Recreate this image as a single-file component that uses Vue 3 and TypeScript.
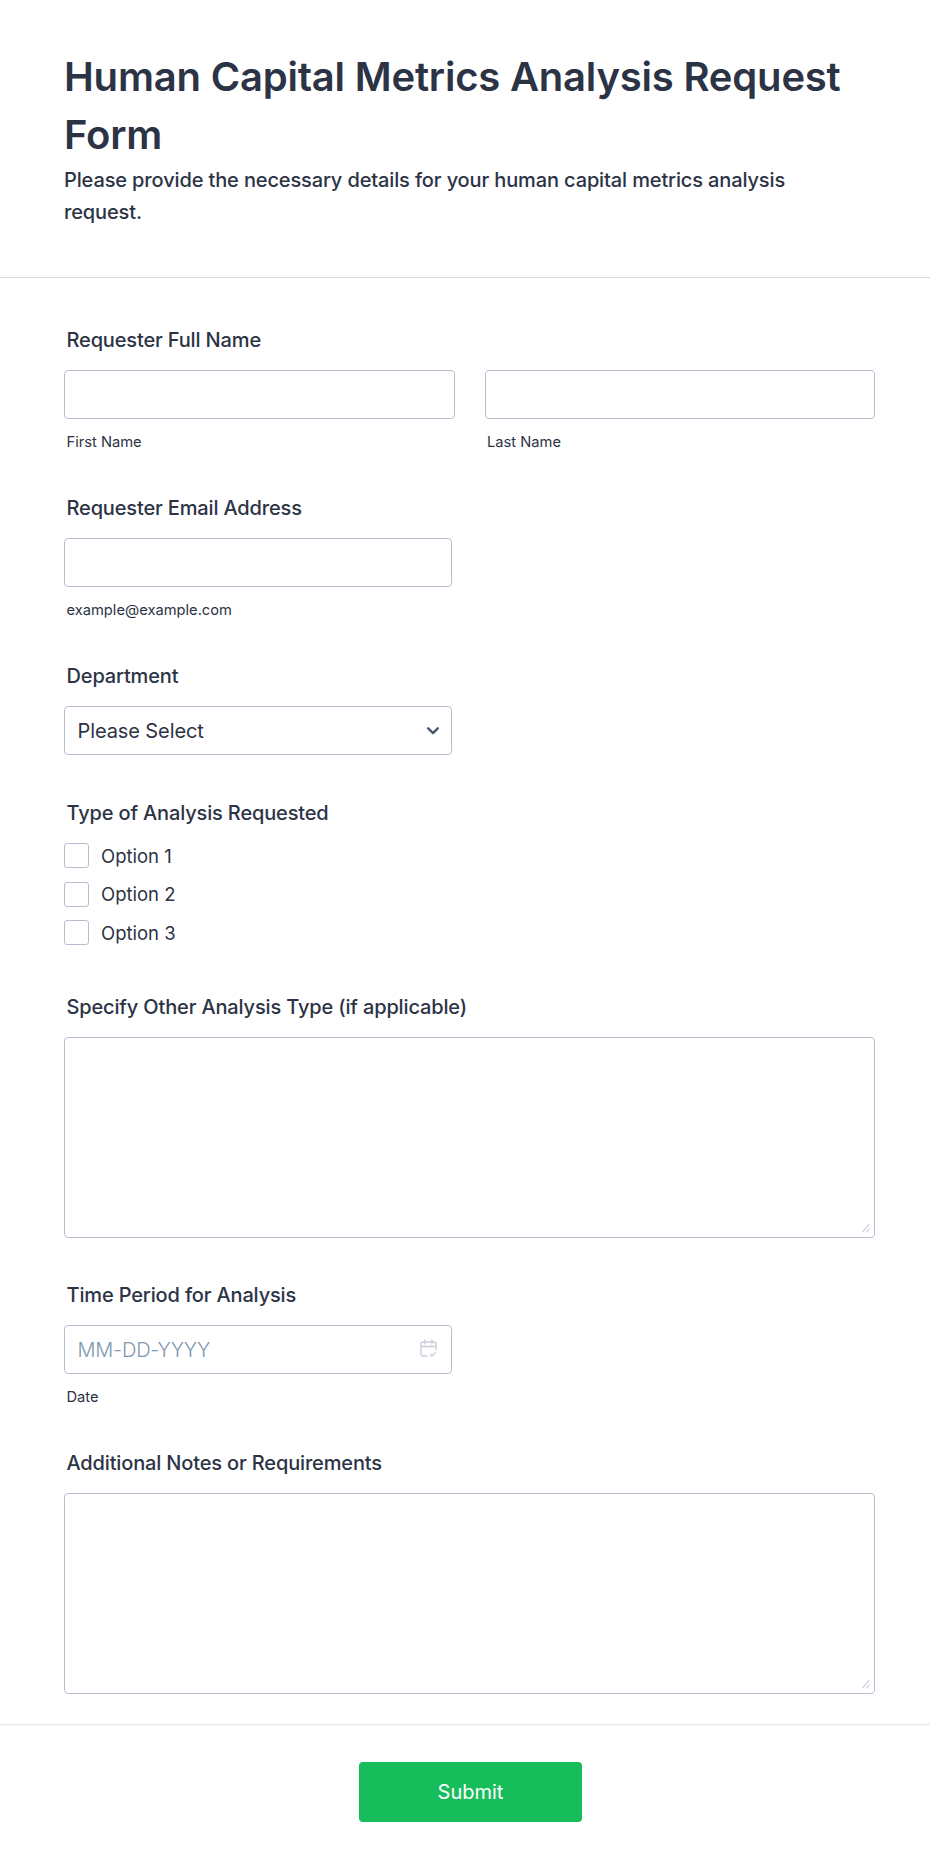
<template>
  <form class="page" @submit.prevent>
    <header class="head">
      <h1 class="head__title">Human Capital Metrics Analysis Request Form</h1>
      <p class="head__sub">Please provide the necessary details for your human capital metrics analysis request.</p>
    </header>

    <div class="body">
      <div class="field">
        <label class="field__label">Requester Full Name</label>
        <div class="name-row">
          <div class="name-col">
            <input class="input" type="text" />
            <span class="field__hint">First Name</span>
          </div>
          <div class="name-col">
            <input class="input" type="text" />
            <span class="field__hint">Last Name</span>
          </div>
        </div>
      </div>

      <div class="field">
        <label class="field__label">Requester Email Address</label>
        <input class="input input--half" type="email" />
        <span class="field__hint">example@example.com</span>
      </div>

      <div class="field field--select">
        <label class="field__label">Department</label>
        <div class="control input--half">
          <select class="input control__select">
            <option>Please Select</option>
          </select>
          <svg class="control__arrow" width="12" height="8" viewBox="0 0 12 8" fill="none">
            <path d="M1.2 1.3 6 6.1l4.8-4.8" stroke="#4b5772" stroke-width="2.4" stroke-linecap="round" stroke-linejoin="round" />
          </svg>
        </div>
      </div>

      <div class="field field--checks">
        <label class="field__label">Type of Analysis Requested</label>
        <label v-for="opt in options" :key="opt" class="check">
          <input class="check__box" type="checkbox" />
          <span>{{ opt }}</span>
        </label>
      </div>

      <div class="field field--area">
        <label class="field__label">Specify Other Analysis Type (if applicable)</label>
        <div class="control control--wide">
          <textarea class="area"></textarea>
          <svg class="area__grip" width="8" height="10" viewBox="0 0 8 10" fill="none">
            <path d="M.6 9 7.4 1M4.2 9.4l3.2-3.8" stroke="#c3c6d6" stroke-width="1.1" />
          </svg>
        </div>
      </div>

      <div class="field">
        <label class="field__label">Time Period for Analysis</label>
        <div class="control input--half">
          <input class="input input--date" type="text" placeholder="MM-DD-YYYY" />
          <!-- calendar with a small tick, same as the form builder's date icon -->
          <svg class="date__icon" width="17" height="19" viewBox="0 0 17 19" fill="none">
            <path d="M7 17H3a2 2 0 0 1-2-2V5a2 2 0 0 1 2-2h11a2 2 0 0 1 2 2v6M1 7.5h15M5 1v4M12 1v4M10.5 15.5l1.5 1.5 3.2-3.2" stroke="#c9cddb" stroke-width="1.4" stroke-linecap="round" stroke-linejoin="round" />
          </svg>
        </div>
        <span class="field__hint">Date</span>
      </div>

      <div class="field field--last">
        <label class="field__label">Additional Notes or Requirements</label>
        <div class="control control--wide">
          <textarea class="area"></textarea>
          <svg class="area__grip" width="8" height="10" viewBox="0 0 8 10" fill="none">
            <path d="M.6 9 7.4 1M4.2 9.4l3.2-3.8" stroke="#c3c6d6" stroke-width="1.1" />
          </svg>
        </div>
      </div>
    </div>

    <footer class="foot">
      <button class="submit" type="submit">Submit</button>
    </footer>
  </form>
</template>

<script setup lang="ts">
const options: string[] = ['Option 1', 'Option 2', 'Option 3']
</script>

<style scoped>
.page {
  width: 930px;
  height: 1871px;
  box-sizing: border-box;
  background: #fff;
  color: #2c3345;
  font-family: Inter, sans-serif;
}

/* ── Header ──────────────────────────────────────────────── */

.head {
  height: 278px;
  box-sizing: border-box;
  padding: 48px 64px 0;
  border-bottom: 1px solid #d8dae5;
}
.head__title {
  margin: 0;
  font-size: 40px;
  font-weight: 600;
  letter-spacing: -0.2px;
  line-height: 58px;
}
.head__sub {
  margin: 0;
  font-size: 20px;
  font-weight: 500;
  letter-spacing: -0.13px;
  line-height: 32px;
  padding-right: 64px;
}

/* ── Fields ──────────────────────────────────────────────── */

.body {
  padding: 48px 55px 0 64px;
}
.field {
  display: flex;
  flex-direction: column;
  align-items: flex-start;
  margin-bottom: 42px;
}
.field--select {
  margin-bottom: 44px;
}
.field--checks {
  margin-bottom: 48px;
}
.field--area {
  margin-bottom: 43px;
}
.field--last {
  margin-bottom: 30px;
}
.field__label {
  margin: 0 0 16px 2.5px;
  font-size: 20px;
  font-weight: 500;
  letter-spacing: -0.15px;
  line-height: 28px;
}
.field__hint {
  margin: 13px 0 0 2.5px;
  font-size: 14.7px;
  line-height: 20px;
}
.name-row {
  display: flex;
  gap: 30px;
  width: 100%;
}
.name-col {
  flex: 1;
  display: flex;
  flex-direction: column;
  align-items: flex-start;
}
.input,
.area {
  display: block;
  width: 100%;
  box-sizing: border-box;
  margin: 0;
  background: #fff;
  border: 1px solid #b8bdd0;
  border-radius: 4px;
  font-family: inherit;
  color: inherit;
  outline: none;
}
.input {
  height: 49px;
  padding: 0 12.5px;
  font-size: 20px;
}
.input--half {
  width: 388px;
}
.input--date {
  font-weight: 300;
  letter-spacing: -0.2px;
}
.input--date::placeholder {
  color: #8097b0;
  opacity: 1;
}
.control__select {
  letter-spacing: -0.1px;
}
.area {
  height: 201px;
  padding: 8px 13px;
  resize: none;
}
.area__grip {
  position: absolute;
  right: 5px;
  bottom: 5px;
  pointer-events: none;
}
.control {
  position: relative;
}
.control--wide {
  width: 100%;
}
.control__select {
  appearance: none;
}
.control__arrow {
  position: absolute;
  top: 21px;
  right: 13px;
  pointer-events: none;
}
.date__icon {
  position: absolute;
  top: 14px;
  right: 15px;
}
.check {
  display: flex;
  align-items: center;
  gap: 12px;
  height: 25px;
  margin-bottom: 13.5px;
  font-size: 18.5px;
}
.check:last-child {
  margin-bottom: 0;
}
.check__box {
  appearance: none;
  width: 25px;
  height: 25px;
  margin: 0;
  background: #fff;
  border: 1px solid #b8bdd0;
  border-radius: 3px;
}

/* ── Footer ──────────────────────────────────────────────── */

.foot {
  display: flex;
  justify-content: center;
  padding: 37px 0 0 11px;
  border-top: 1px solid #e3e5f0;
}
.submit {
  width: 223px;
  height: 60px;
  border: none;
  border-radius: 4px;
  background: #18bd5b;
  color: #fff;
  font-family: inherit;
  font-size: 20px;
  font-weight: 400;
}
</style>

<style>
body {
  background: #fff;
}
</style>
